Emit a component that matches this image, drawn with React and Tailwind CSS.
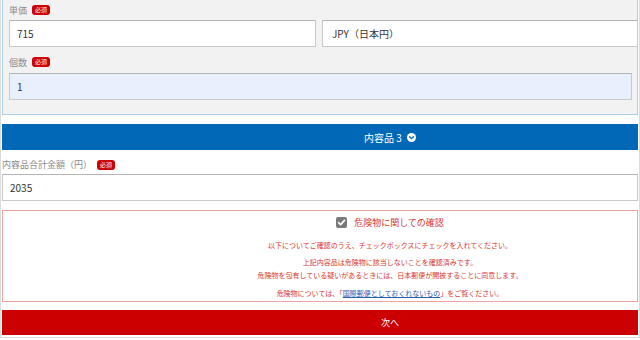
const font = { fontFamily: '"Noto Sans CJK JP", "Liberation Sans", sans-serif' };

const Badge = () => (
  <span className="inline-flex items-center justify-center w-[18px] h-[10px] rounded-[3px] bg-[#cc0000] text-white text-[6px] leading-none">
    必須
  </span>
);

const Label = ({ children, className = '' }) => (
  <div className={`flex items-center gap-[5px] text-[9px] leading-none text-[#8a8a8a] ${className}`}>
    <span>{children}</span>
    <Badge />
  </div>
);

const Field = ({ value, className = '' }) => (
  <div
    className={`h-[27px] flex items-center pl-[7px] border border-[#c9c9c9] border-t-[#b5b5b5] text-[10px] text-[#333] ${className}`}
  >
    {value}
  </div>
);

const CircleDown = () => (
  <svg width="9" height="9" viewBox="0 0 16 16">
    <circle cx="8" cy="8" r="8" fill="#fff" />
    <path d="M4.5 6.5 8 10l3.5-3.5" fill="none" stroke="#0068b6" strokeWidth="2.4" strokeLinecap="round" strokeLinejoin="round" />
  </svg>
);

const CheckBox = () => (
  <svg width="11" height="11" viewBox="0 0 11 11">
    <rect width="11" height="11" rx="2" fill="#7b7b7b" />
    <path d="M2.6 5.6 4.6 7.6 8.5 3.4" fill="none" stroke="#fff" strokeWidth="1.6" strokeLinecap="round" strokeLinejoin="round" />
  </svg>
);

export default function App() {
  return (
    <div className="w-[640px] h-[340px] bg-white overflow-hidden" style={font}>
      <div className="h-[338px] border-l border-r border-b border-[#dcdcdc] px-[1px]">
        {/* item form panel */}
        <div className="bg-[#f2f2f2] border-l border-r border-b border-[#a8d0ec] pl-[6px] pr-[2px] pb-[14px]">
          <Label className="h-[20px]">単価</Label>
          <div className="flex gap-[6px] -mr-[3px]">
            <Field value="715" className="w-[307px] bg-white" />
            <Field value="JPY（日本円）" className="flex-1 bg-white pl-[9px]" />
          </div>
          <Label className="h-[26px] pt-[4px]">個数</Label>
          <Field value="1" className="bg-[#e8f0fe] mr-[3px]" />
        </div>

        {/* accordion header */}
        <div className="mt-[9px] h-[26px] bg-[#0068b6] flex items-center justify-center gap-[5px] pl-[140px] text-white text-[10px]">
          <span>内容品 3</span>
          <CircleDown />
        </div>

        <Label className="h-[24px] pt-[5px]">内容品合計金額（円）</Label>
        <Field value="2035" className="bg-white" />

        {/* dangerous goods confirmation */}
        <div className="mt-[9px] h-[92px] border border-[#f0a3a3] pl-[140px] text-[#d9372f] text-center">
          <div className="h-[22px] flex items-center justify-center gap-[7px]">
            <CheckBox />
            <span className="text-[9px] leading-none">危険物に関しての確認</span>
          </div>
          <p className="mt-[7px] text-[7px] leading-[11px]">
            以下についてご確認のうえ、チェックボックスにチェックを入れてください。
          </p>
          <p className="mt-[5px] text-[7px] leading-[13px]">
            上記内容品は危険物に該当しないことを確認済みです。
            <br />
            危険物を包有している疑いがあるときには、日本郵便が開披することに同意します。
          </p>
          <p className="mt-[6px] text-[7px] leading-[11px]">
            危険物については、「<span className="text-[#2a5db0] underline">国際郵便としておくれないもの</span>」をご覧ください。
          </p>
        </div>

        {/* next button */}
        <div className="mt-[8px] h-[25px] bg-[#cc0000] flex items-center justify-center pl-[140px] text-white text-[9px]">
          次へ
        </div>
      </div>
    </div>
  );
}
